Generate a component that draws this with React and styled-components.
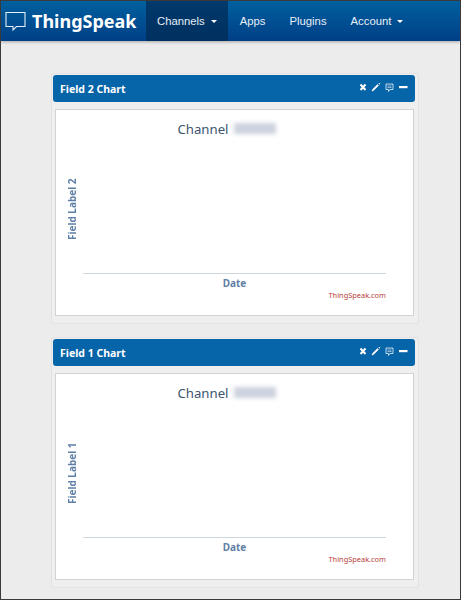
import React from 'react';
import styled, { createGlobalStyle } from 'styled-components';

const GlobalStyle = createGlobalStyle`
  html, body {
    margin: 0;
    padding: 0;
    background: #ececec;
  }
  * {
    box-sizing: border-box;
  }
`;

const Page = styled.div`
  width: 461px;
  height: 600px;
  overflow: hidden;
  background: #ececec;
  border: 1px solid #3a3a3a;
`;

const Navbar = styled.div`
  display: flex;
  height: 40px;
  background: linear-gradient(#00609f, #003f86);
  box-shadow: 0 1px 3px rgba(0, 0, 0, 0.3);
`;

const Brand = styled.div`
  display: flex;
  align-items: center;
  gap: 6px;
  width: 145px;
  padding-left: 4px;
  color: #fff;
  font: bold 18px 'Noto Sans', sans-serif;
`;

const NavItem = styled.div`
  display: flex;
  align-items: center;
  gap: 6px;
  height: 100%;
  padding: 0 ${({ $pad }) => $pad || 12}px;
  color: #e8eef6;
  font: 11.3px 'Liberation Sans', sans-serif;
  background: ${({ $active }) => ($active ? 'linear-gradient(#003a6c, #00305f)' : 'transparent')};
`;

const Caret = styled.span`
  width: 0;
  height: 0;
  border-left: 3px solid transparent;
  border-right: 3px solid transparent;
  border-top: 3px solid #fff;
`;

const Content = styled.div`
  display: flex;
  flex-direction: column;
  gap: 13px;
  padding: 32px 41px 0 50px;
`;

const Well = styled.div`
  height: 251px;
  padding: 1px 3px 0 1px;
  background: #efefef;
  border: 1px solid #e2e2e2;
  border-radius: 3px;
`;

const PanelHeader = styled.div`
  display: flex;
  align-items: center;
  justify-content: space-between;
  height: 27px;
  padding: 0 7px;
  background: #0664a8;
  border-radius: 3px;
  color: #fff;
  font: bold 10.5px 'Noto Sans', sans-serif;
`;

const PanelActions = styled.div`
  display: flex;
  align-items: center;
  gap: 4px;
  margin-top: -3px;
`;

const ChartBox = styled.div`
  display: flex;
  flex-direction: column;
  height: 207px;
  margin: 7px 1px 0 2px;
  background: #fff;
  border: 1px solid #d2d2d2;
`;

const ChartTitle = styled.div`
  display: flex;
  justify-content: center;
  align-items: center;
  gap: 5px;
  height: 17px;
  margin-top: 10px;
  padding-right: 16px;
  color: #3d5570;
  font: 13.2px 'Noto Sans', sans-serif;
`;

const Blurred = styled.span`
  width: 42px;
  height: 11px;
  background: #cdd2de;
  filter: blur(2px);
`;

const Plot = styled.div`
  display: flex;
  height: 129px;
  margin-top: 8px;
`;

const YLabel = styled.div`
  display: flex;
  align-items: center;
  justify-content: center;
  width: 27px;
  padding-right: 4px;
  writing-mode: vertical-rl;
  transform: rotate(180deg);
  color: #5f7fa6;
  font: bold 10px 'Noto Sans', sans-serif;
`;

const Axis = styled.div`
  flex: 1;
  margin-right: 27px;
  border-bottom: 1px solid #ccd6dc;
`;

const XLabel = styled.div`
  margin-top: 2px;
  text-align: center;
  color: #5f7fa6;
  font: bold 10px 'Noto Sans', sans-serif;
`;

const Credit = styled.div`
  margin: 0 27px 0 0;
  text-align: right;
  color: #b8403c;
  font: 7.4px 'Noto Sans', sans-serif;
  line-height: 11px;
`;

const ChatIcon = () => (
  <svg width="21" height="21" viewBox="0 0 21 21" fill="none" stroke="#e6eef6" strokeWidth="1.1">
    <path d="M1 1.500h19v14h-8.500l-3.500 3.500v-3.500h-7z" />
  </svg>
);

const CloseIcon = () => (
  <svg width="8" height="9" viewBox="0 0 8 9" stroke="#fff" strokeWidth="2">
    <path d="M1.500 1.500l5 5.500M6.500 1.500l-5 5.500" />
  </svg>
);

const PencilIcon = () => (
  <svg width="10" height="10" viewBox="0 0 10 10" stroke="#fff" fill="none">
    <path d="M1 9l1.500-.5 5-5-1-1-5 5z" fill="#fff" strokeWidth="0.6" />
    <path d="M8 2l.8-.8" strokeWidth="1.600" />
  </svg>
);

const CommentIcon = () => (
  <svg width="9" height="10" viewBox="0 0 9 10" fill="none" stroke="#d6e6f2" strokeWidth="0.9">
    <path d="M1 2h7v5.500h-3l-1.500 2v-2h-2.500z" />
    <path d="M2.500 4h4M2.500 5.600h4" strokeWidth="0.7" />
  </svg>
);

const MinusIcon = () => (
  <svg width="10" height="9" viewBox="0 0 10 9" fill="#fff">
    <rect x="1" y="3" width="8.500" height="2.200" />
  </svg>
);

const ChartPanel = ({ field }) => (
  <Well>
    <PanelHeader>
      Field {field} Chart
      <PanelActions>
        <CloseIcon />
        <PencilIcon />
        <CommentIcon />
        <MinusIcon />
      </PanelActions>
    </PanelHeader>
    <ChartBox>
      <ChartTitle>
        Channel
        <Blurred />
      </ChartTitle>
      <Plot>
        <YLabel>Field Label {field}</YLabel>
        <Axis />
      </Plot>
      <XLabel>Date</XLabel>
      <Credit>ThingSpeak.com</Credit>
    </ChartBox>
  </Well>
);

const App = () => (
  <Page>
    <GlobalStyle />
    <Navbar>
      <Brand>
        <ChatIcon />
        ThingSpeak
      </Brand>
      <NavItem $active $pad={11}>
        Channels
        <Caret />
      </NavItem>
      <NavItem>Apps</NavItem>
      <NavItem>Plugins</NavItem>
      <NavItem>
        Account
        <Caret />
      </NavItem>
    </Navbar>
    <Content>
      <ChartPanel field={2} />
      <ChartPanel field={1} />
    </Content>
  </Page>
);

export default App;
